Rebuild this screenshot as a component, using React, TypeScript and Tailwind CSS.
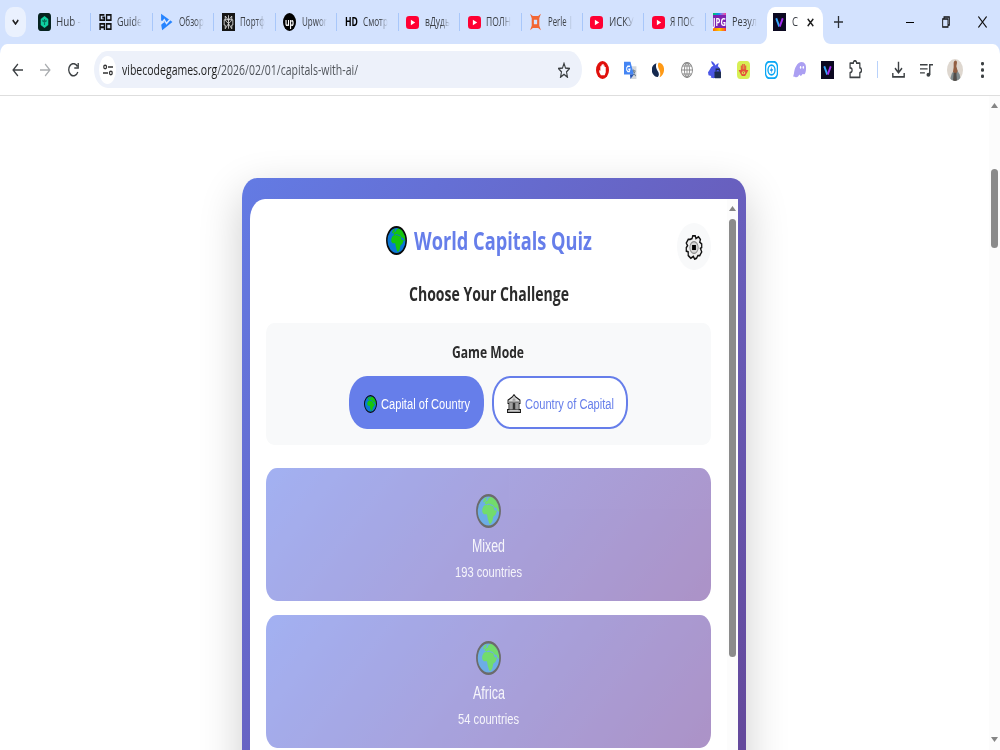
import React, { useLayoutEffect, useRef, useState } from 'react';

interface FitProps {
  className: string;
  children: React.ReactNode;
}

// Squeezes a single line of text so that it fills the width of its box
function Fit({ className, children }: FitProps) {
  const box = useRef<HTMLSpanElement>(null);
  const text = useRef<HTMLSpanElement>(null);
  const [scale, setScale] = useState(0.73);

  useLayoutEffect(() => {
    if (box.current && text.current) {
      setScale(box.current.offsetWidth / text.current.getBoundingClientRect().width * scale);
    }
  }, []);

  return (
    <span ref={box} className={`block shrink-0 whitespace-nowrap ${className}`}>
      <span ref={text} className="inline-block origin-left" style={{ transform: `scaleX(${scale})` }}>
        {children}
      </span>
    </span>
  );
}

interface IconProps {
  className?: string;
  box?: string;
  children: React.ReactNode;
}

function Icon({ className = 'w-[13px] h-[18px]', box = '0 0 24 24', children }: IconProps) {
  return (
    <svg viewBox={box} preserveAspectRatio="none" className={`block shrink-0 ${className}`} fill="none">
      {children}
    </svg>
  );
}

function Globe({ className }: { className: string }) {
  return (
    <Icon className={className} box="0 0 32 32">
      <circle cx="16" cy="16" r="14.8" fill="#0b78d6" />
      <path d="M8 14l2-3 3-1 4 0 5 1.500 2 4 3 0-2 4-3 2-1 4-2 2.500-2 0-2-5-1-4-4 0-2-2z" fill="#16c60c" />
      <path d="M11 9l1-2 3-1 1-2 4-2 5 3 4 6 1 6-2-1-2-3-2 0-2-2-4-1-2-1-2 1z" fill="#16c60c" />
      <path d="M9 7l2-3 3-1-1 3-3 2z" fill="#16c60c" />
      <path d="M14 10.200l3-.7 5 1.500" stroke="#0b78d6" strokeWidth="0.900" />
      <circle cx="16" cy="16" r="14.800" stroke="#0a0a0a" strokeWidth="2.200" />
    </Icon>
  );
}

function Bank() {
  return (
    <Icon className="w-[14px] h-[19px]" box="0 0 28 28">
      <path d="M14 1l3 3 9 5v5h-2v9h3v4H1v-4h3v-9H2V9l9-5z" fill="#d8d8d8" stroke="#111" strokeWidth="1.800" />
      <path d="M4 12h20M4 23h20" stroke="#333" strokeWidth="1.400" />
      <path d="M8 13v10M20 13v10" stroke="#666" strokeWidth="2" />
      <path d="M11 13h6v10h-6z" fill="#333" />
      <path d="M14 5v4M11 9h6" stroke="#888" strokeWidth="1.500" />
    </Icon>
  );
}

function Gear() {
  return (
    <Icon className="w-[18px] h-[25px]" box="-14 -14 28 28">
      <path
        d="M-3-10L-2-13H2L3-10L7-12L10-9L9-6L12-4V0L10 1L12 5L9 9L6 9L4 12L1 13L-1 10L-5 12L-9 9L-9 5L-12 4V0L-10-2L-12-5L-9-9L-6-9Z"
        fill="#f0f0f0"
        stroke="#111"
        strokeWidth="2"
      />
      <circle r="6.500" stroke="#8a8a8a" strokeWidth="1.300" fill="#d6d6d6" />
      <rect x="-3" y="-2.800" width="6" height="5.600" fill="#000" />
    </Icon>
  );
}

const YouTube = (
  <Icon className="w-[13px] h-[13px]" box="0 0 24 24">
    <rect width="24" height="24" rx="6" fill="#ff0033" />
    <path d="M9 7l8 5-8 5z" fill="#fff" />
  </Icon>
);

const VLogo = (
  <Icon>
    <rect width="24" height="24" fill="#0b0820" />
    <path d="M6 7l5.500 11" stroke="#38a8ff" strokeWidth="3.500" />
    <path d="M18 7l-5.500 11" stroke="#a32cf0" strokeWidth="3.500" />
  </Icon>
);

const tabs = [
  {
    title: 'Hub -',
    icon: (
      <Icon>
        <rect width="24" height="24" rx="5" fill="#06231f" />
        <path d="M12 4l7 4v8l-7 4-7-4V8z" fill="#0fd0a0" />
        <path d="M12 8v8M8 10l4 2 4-2" stroke="#06735c" strokeWidth="2" />
      </Icon>
    ),
  },
  {
    title: 'Guide',
    icon: (
      <Icon>
        <g stroke="#111" strokeWidth="2.600">
          <path d="M10 2.500H2v7h8V6H6M14 2.500h8v7h-8zM2 22.500v-8h8v8M2 19h8M14 14.500h8v7h-8z" />
        </g>
      </Icon>
    ),
  },
  {
    title: 'Обзор',
    icon: (
      <Icon>
        <path d="M2 1l21 11L4 23l-2-8 7-3-7-2z" fill="#2684ff" />
        <path d="M1 15l7-6 4 5 6-5" stroke="#dce8ff" strokeWidth="2.500" />
      </Icon>
    ),
  },
  {
    title: 'Портф',
    icon: (
      <Icon>
        <rect width="24" height="24" fill="#151515" />
        <path d="M12 3v18M6 4v6l6 4 6-4V4l-6 6zM4 9h16v7h-2v5l-6-7-6 7v-5H4z" stroke="#ddd" strokeWidth="1.300" />
      </Icon>
    ),
  },
  {
    title: 'Upwor',
    icon: (
      <span className="flex h-[18px] w-[13px] shrink-0 items-center justify-center bg-black [border-radius:50%]">
        <Fit className="w-[9px] text-[10px] leading-[14px] font-bold text-white">up</Fit>
      </span>
    ),
  },
  {
    title: 'Смотр',
    icon: <Fit className="w-[13px] text-[12px] leading-[18px] font-bold text-black">HD</Fit>,
  },
  { title: 'вДудь', icon: YouTube },
  { title: 'ПОЛН', icon: YouTube },
  {
    title: 'Perle |',
    icon: (
      <Icon>
        <path d="M2 1l5 3h10l5-3-3 6v10l3 6-5-3H7l-5 3 3-6V7z" fill="#f26634" />
        <path d="M9 9h6v6H9z" fill="#d3e2fe" />
      </Icon>
    ),
  },
  { title: 'ИСКУ', icon: YouTube },
  { title: 'Я ПОС', icon: YouTube },
  {
    title: 'Резул',
    icon: (
      <span className="flex h-[18px] w-[13px] shrink-0 flex-col justify-between bg-[#7d22b0]">
        <span className="h-[2px] bg-gradient-to-r from-green-500 via-blue-500 to-pink-500" />
        <Fit className="w-[13px] text-[10px] leading-[12px] font-bold text-white">JPG</Fit>
        <span className="h-[3px] bg-gradient-to-r from-orange-500 via-yellow-400 to-red-500" />
      </span>
    ),
  },
];

const extensions = [
  <Icon key="hand" className="h-[18px] w-[13px]">
    <ellipse cx="12" cy="12" rx="12" ry="12" fill="#e0100c" />
    <path d="M6 12l2 1V7h2V5h2v-1h2v2h2v2h2v7l-2 4H9l-3-4z" fill="#fff" />
  </Icon>,
  <Icon key="translate" className="h-[18px] w-[13px]">
    <path d="M9 7h14v17H12z" fill="#d4d7dc" />
    <path d="M14 13h7M17 11v2c2 5 3 6 5 7M21 13c-2 4-3 5-6 7" stroke="#71818d" strokeWidth="1.400" />
    <path d="M0 1h12l6 17H0z" fill="#4485f4" />
    <path d="M11 7H7L5 9v3l2 2h3l1-3H8" stroke="#fff" strokeWidth="1.800" />
    <path d="M12 24l6-6h-7z" fill="#2857b9" />
  </Icon>,
  <Icon key="similar" className="h-[16px] w-[12px]">
    <path d="M9 2C-2 5-3 14 3 19c3 3 7 4 9 3 3-3 2-6-1-9-3-4-4-7-2-11z" fill="#15294f" />
    <path d="M13 1c10 0 13 9 10 15-2 4-5 6-8 7 3-5 1-9-1-12-2-4-3-6-1-10z" fill="#ff9a16" />
  </Icon>,
  <Icon key="world" className="h-[16px] w-[12px]">
    <g stroke="#878787" strokeWidth="1.700">
      <circle cx="12" cy="12" r="11" />
      <ellipse cx="12" cy="12" rx="5" ry="11" />
      <path d="M12 1v22M1 12h22M3 6h18M3 18h18" />
    </g>
  </Icon>,
  <Icon key="rabbit" className="h-[18px] w-[13px]">
    <path d="M6 0c4 1 7 4 8 6 2-2 4-3 6-3l-2 4c3 1 5 4 6 7l-4 2-4 6-6 1-5-1 1-2-5-1-1-4 2-2 4-5 4-2c-2-1-4-3-4-6z" fill="#4b57e6" />
    <rect x="12" y="14" width="12" height="9" rx="1" fill="#1d2d50" />
    <path d="M15 14v-3h6v3" stroke="#1d2d50" strokeWidth="2" />
  </Icon>,
  <Icon key="palm" className="h-[18px] w-[13px]">
    <rect width="24" height="24" rx="6" fill="#d7ef55" />
    <path d="M7 6h2v5h.6V4h2v7h.8V4h2v7h.6V6h2v6l4 0-2 3-4 5H9l-4-5-2-3 4 0z" fill="#e5503b" />
    <ellipse cx="12" cy="15.500" rx="3.300" ry="2" fill="#d7ef55" />
    <circle cx="12" cy="15.500" r="1.300" fill="#e5503b" />
  </Icon>,
  <Icon key="bolt" className="h-[18px] w-[13px]">
    <rect x="1" y="1" width="22" height="22" rx="7" fill="#fff" stroke="#0aa7f5" strokeWidth="2.500" />
    <circle cx="12" cy="12" r="6.500" stroke="#0aa7f5" strokeWidth="2.500" />
    <path d="M13 7l-4 6h3l-1 4 4-6h-3z" fill="#0a8bea" />
  </Icon>,
  <Icon key="ghost" className="h-[17px] w-[13px]">
    <path d="M0 22C3 18 1 13 6 7c4-6 13-8 17-2 2 4 1 10-1 13-2 2-3-1-5 1-2 3-4 2-5 0-2 2-3 4-6 4-2 0-3-2-6-1z" fill="#ab9ff2" />
    <ellipse cx="14" cy="9" rx="1.400" ry="2" fill="#fff" />
    <ellipse cx="19" cy="9" rx="1.400" ry="2" fill="#fff" />
  </Icon>,
  <React.Fragment key="v">{VLogo}</React.Fragment>,
  <Icon key="puzzle" className="h-[19px] w-[13px]">
    <path d="M2 4h6c0-4 6-4 6 0h6v6c4 0 4 6 0 6v6H2v-6c5 0 5-6 0-6z" stroke="#3c4043" strokeWidth="2.300" strokeLinejoin="round" />
  </Icon>,
];

function TabStrip() {
  return (
    <div className="flex h-[44px] bg-[#d3e2fe]">
      <div className="flex w-[30px] shrink-0 pt-[7px] pl-[5px]">
        <div className="flex h-[30px] w-[21px] items-center justify-center bg-[#eaf1fe] [border-radius:8px/10px]">
          <Icon className="h-[6px] w-[7px]" box="0 0 10 6">
            <path d="M1 1l4 4 4-4" stroke="#1f1f1f" strokeWidth="1.900" />
          </Icon>
        </div>
      </div>
      {tabs.map((tab, i) => (
        <div key={i} className="flex h-[44px] w-[61.450px] shrink-0 items-center pl-[7.500px]">
          <span className="flex w-[18.500px] shrink-0">{tab.icon}</span>
          <span className="w-[25px] shrink-0 overflow-hidden [mask-image:linear-gradient(to_right,black_65%,transparent)]">
            <Fit className="w-[25px] text-[12.500px] leading-[18px] text-[#3b3f45]">{tab.title}</Fit>
          </span>
          {i < tabs.length - 1 && <span className="ml-auto h-[18px] w-px bg-[#a8c7fa]" />}
        </div>
      ))}
      <div className="flex w-[56px] shrink-0 pt-[7px]">
        <div className="relative flex h-[37px] w-[56px] items-center bg-white pb-[7px] pl-[6px] [border-radius:8px_8px_0_0/11px_11px_0_0]">
          <Icon className="absolute bottom-0 -left-[8px] h-[10px] w-[8px]" box="0 0 8 10">
            <path d="M8 0v10H0c5 0 8-4 8-10z" fill="#fff" />
          </Icon>
          <Icon className="absolute -right-[8px] bottom-0 h-[10px] w-[8px]" box="0 0 8 10">
            <path d="M0 0v10h8c-5 0-8-4-8-10z" fill="#fff" />
          </Icon>
          {VLogo}
          <Fit className="ml-[6px] w-[6px] text-[12.500px] leading-[18px] text-[#3b3f45]">С</Fit>
          <Icon className="ml-[9px] h-[9px] w-[7px]" box="0 0 10 10">
            <path d="M1 1l8 8M9 1l-8 8" stroke="#1f1f1f" strokeWidth="1.900" />
          </Icon>
        </div>
      </div>
      <div className="flex flex-1 items-center justify-between pr-[13px] pl-[11px]">
        <Icon className="h-[12px] w-[9px]" box="0 0 12 12">
          <path d="M6 0v12M0 6h12" stroke="#2c3036" strokeWidth="1.700" />
        </Icon>
        <div className="flex items-center gap-[28px]">
          <span className="h-px w-[8px] bg-black" />
          <Icon className="h-[12px] w-[8px]" box="0 0 12 12">
            <path d="M1 3h8v8H1zM3 3V1h8v8H9" stroke="#111" strokeWidth="1.400" />
          </Icon>
          <Icon className="h-[12px] w-[9px]" box="0 0 12 12">
            <path d="M.5.5l11 11M11.500.5l-11 11" stroke="#111" strokeWidth="1.300" />
          </Icon>
        </div>
      </div>
    </div>
  );
}

function Toolbar() {
  return (
    <div className="h-[52px] bg-[#d3e2fe]">
      <div className="flex h-[52px] items-center border-b border-[#dedede] bg-white [border-radius:7px_7px_0_0/10px_10px_0_0]">
        <div className="flex w-[94px] items-center gap-[17px] pl-[12px]">
          <Icon className="h-[14px] w-[11px]" box="0 0 14 14">
            <path d="M14 7H1.500M7.500 1l-6 6 6 6" stroke="#3c4043" strokeWidth="1.700" />
          </Icon>
          <Icon className="h-[14px] w-[11px]" box="0 0 14 14">
            <path d="M0 7h12.500M6.500 1l6 6-6 6" stroke="#aaadb0" strokeWidth="1.600" />
          </Icon>
          <Icon className="h-[14px] w-[11px]" box="0 0 14 14">
            <path d="M12.500 9A6 6 0 1 1 12 3.500M13 0v5H8" stroke="#3c4043" strokeWidth="1.700" />
          </Icon>
        </div>
        <div className="flex h-[37px] w-[488px] shrink-0 items-center bg-[#edf1fa] pr-[12px] pl-[5px] [border-radius:14px/18.5px]">
          <div className="flex h-[28px] w-[17px] items-center justify-center bg-white [border-radius:50%]">
            <Icon className="h-[12px] w-[10px]" box="0 0 14 14">
              <circle cx="3" cy="3.500" r="2" stroke="#333" strokeWidth="1.600" />
              <circle cx="11" cy="10.500" r="2" stroke="#333" strokeWidth="1.600" />
              <path d="M7 3.500h7M0 10.500h7" stroke="#333" strokeWidth="1.700" />
            </Icon>
          </div>
          <Fit className="ml-[6px] w-[236px] text-[14px] leading-[20px] text-[#50545a]">
            <span className="text-[#1f1f1f]">vibecodegames.org</span>/2026/02/01/capitals-with-ai/
          </Fit>
          <Icon className="ml-auto h-[16px] w-[12px]">
            <path d="M12 2l3 7 8 .8-6 5 2 8-7-4.300-7 4.300 2-8-6-5L9 9z" stroke="#3c4043" strokeWidth="2.200" />
          </Icon>
        </div>
        <div className="ml-[6px] grid w-[282px] shrink-0 grid-cols-10 items-center justify-items-center">
          {extensions.map((ext) => ext)}
        </div>
        <span className="ml-[7px] h-[17px] w-px bg-[#b9d2fb]" />
        <div className="ml-[6px] grid w-[113px] shrink-0 grid-cols-4 items-center justify-items-center">
          <Icon className="h-[17px] w-[13px]">
            <path d="M12 1v15M5.500 10l6.500 6.500 6.500-6.500M1.500 17v5.500h21V17" stroke="#3c4043" strokeWidth="2.600" />
          </Icon>
          <Icon className="h-[14px] w-[13px]">
            <path d="M0 3h14M0 10h14M0 17h9" stroke="#3c4043" strokeWidth="2.400" />
            <path d="M18 20V3h6" stroke="#3c4043" strokeWidth="2.600" />
            <ellipse cx="15.500" cy="20" rx="3.500" ry="3.500" fill="#3c4043" />
          </Icon>
          <Icon className="h-[22px] w-[16px] [border-radius:50%]">
            <rect width="24" height="24" fill="#ded7cf" />
            <path d="M4 24l3-8 4-4h4l4 5 2 7z" fill="#818c8e" />
            <path d="M10 4c1-3 5-3 5 0l-1 4 2 5-3 4-4-3 1-5z" fill="#925f42" />
            <path d="M10 15h4l1 9H9z" fill="#514d49" />
          </Icon>
          <Icon className="h-[16px] w-[3px]" box="0 0 3 16">
            <rect width="3" height="3.400" rx="1.300" fill="#3c4043" />
            <rect y="6.300" width="3" height="3.400" rx="1.300" fill="#3c4043" />
            <rect y="12.600" width="3" height="3.400" rx="1.300" fill="#3c4043" />
          </Icon>
        </div>
      </div>
    </div>
  );
}

function Arrow({ down = false }: { down?: boolean }) {
  return (
    <Icon className="h-[5px] w-[7px]" box="0 0 8 6">
      <path d={down ? 'M0 0h8L4 6z' : 'M0 6h8L4 0z'} fill="#858585" />
    </Icon>
  );
}

interface RegionCardProps {
  name: string;
  count: string;
  nameWidth: string;
  countWidth: string;
}

function RegionCard({ name, count, nameWidth, countWidth }: RegionCardProps) {
  return (
    <div className="flex h-[133px] shrink-0 flex-col items-center bg-[linear-gradient(127deg,#667eea,#764ba2)] pt-[26px] text-white/90 opacity-60 [border-radius:11px/15px]">
      <Globe className="h-[34px] w-[25px]" />
      <Fit className={`mt-[7px] font-['Liberation_Sans',Arial,sans-serif] text-[17.500px] leading-[22px] ${nameWidth}`}>{name}</Fit>
      <Fit className={`mt-[4px] font-['Liberation_Sans',Arial,sans-serif] text-[15px] leading-[22px] ${countWidth}`}>{count}</Fit>
    </div>
  );
}

function Quiz() {
  return (
    <div className="ml-[242px] h-[900px] w-[504px] bg-[linear-gradient(127deg,#637be4,#685fbe_43%,#64499c_78%)] px-[8px] pt-[21px] shadow-[0_14px_44px_rgba(0,0,0,0.2)] [border-radius:15px/20px]">
      <div className="flex h-[860px] bg-white [border-top-left-radius:15px_20px]">
        <div className="flex w-[477px] shrink-0 flex-col px-[16px]">
          <div className="relative flex h-[85px] justify-center pt-[27px]">
            <div className="flex h-[29px] items-center gap-[7px] pl-px">
              <Globe className="h-[29px] w-[21px]" />
              <Fit className="w-[178px] text-[25.500px] leading-[29px] font-bold text-[#667eea]">World Capitals Quiz</Fit>
            </div>
            <div className="absolute top-[24px] right-0 flex h-[47px] w-[34px] items-center justify-center bg-[#f8f9fa] pt-[2px] [border-radius:50%]">
              <Gear />
            </div>
          </div>
          <div className="flex h-[39px] justify-center">
            <Fit className="h-[20px] w-[160px] text-[19px] leading-[20px] font-bold text-[#2b2b2b]">Choose Your Challenge</Fit>
          </div>
          <div className="flex h-[122px] shrink-0 flex-col items-center bg-[#f8f9fa] pt-[18px] [border-radius:8px/10px]">
            <Fit className="mr-px w-[72px] text-[15.500px] leading-[22px] font-bold text-[#2b2b2b]">Game Mode</Fit>
            <div className="mt-[13px] flex gap-[8px] font-['Liberation_Sans',Arial,sans-serif] text-[15.500px] leading-[20px]">
              <div className="flex h-[53px] w-[135px] items-center justify-center gap-[4px] bg-[#667eea] pt-[2px] text-white [border-radius:18px/24px]">
                <Globe className="h-[18px] w-[13px]" />
                <Fit className="w-[89px]">Capital of Country</Fit>
              </div>
              <div className="flex h-[53px] w-[136px] items-center justify-center gap-[4px] border-2 border-[#667eea] bg-white pt-[2px] text-[#667eea] [border-radius:18px/24px]">
                <Bank />
                <Fit className="w-[89px]">Country of Capital</Fit>
              </div>
            </div>
          </div>
          <div className="mt-[23px] flex flex-col gap-[13.500px]">
            <RegionCard name="Mixed" count="193 countries" nameWidth="w-[33px]" countWidth="w-[67px]" />
            <RegionCard name="Africa" count="54 countries" nameWidth="w-[32px]" countWidth="w-[61px]" />
          </div>
        </div>
        <div className="flex w-[11px] flex-col items-center bg-[#fcfcfc] pt-[7px] pr-px">
          <Arrow />
          <span className="mt-[8px] h-[438px] w-[7px] rounded-full bg-[#8b8b8b]" />
        </div>
      </div>
    </div>
  );
}

export default function App() {
  return (
    <div className="flex h-[750px] w-[1000px] flex-col overflow-hidden bg-white font-['Open_Sans','Noto_Sans',sans-serif]">
      <TabStrip />
      <Toolbar />
      <div className="flex h-[654px]">
        <div className="h-[654px] w-[989px] overflow-hidden pt-[82px]">
          <Quiz />
        </div>
        <div className="flex w-[11px] flex-col items-center bg-[#fcfcfc] pt-[7px] pr-px pb-[8px]">
          <Arrow />
          <span className="mt-[61px] h-[79px] w-[7px] rounded-full bg-[#8b8b8b]" />
          <span className="mt-auto">
            <Arrow down />
          </span>
        </div>
      </div>
    </div>
  );
}
